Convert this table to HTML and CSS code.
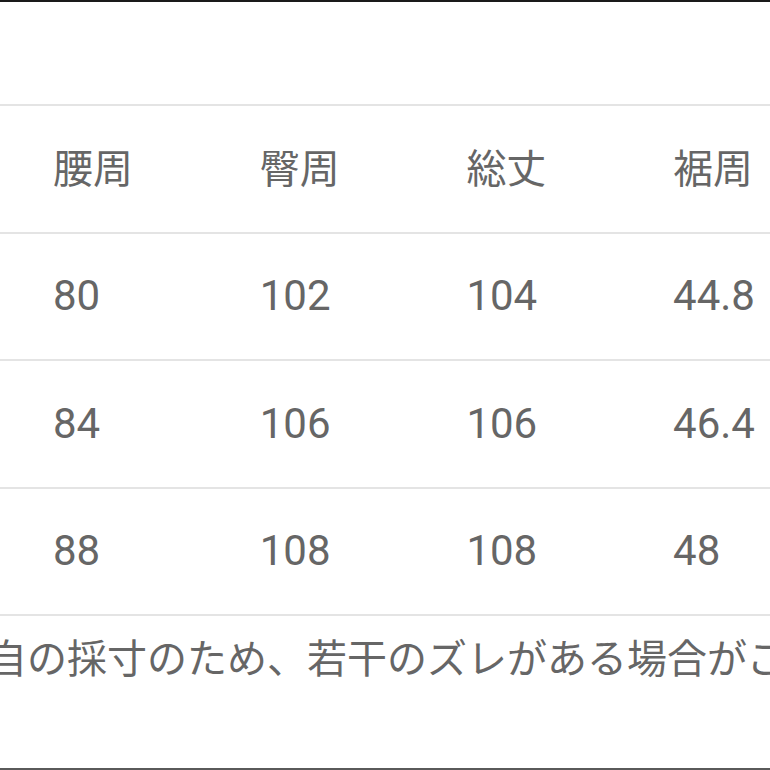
FILE: index.html
```html
<!DOCTYPE html>
<html lang="ja">
<head>
<meta charset="utf-8">
<link rel="stylesheet" href="styles.css">
</head>
<body>
<div class="page">
  <div class="topbar"></div>
  <div class="table">
    <div class="row head">
      <div class="cell">腰周</div>
      <div class="cell">臀周</div>
      <div class="cell">総丈</div>
      <div class="cell">裾周</div>
    </div>
    <div class="row">
      <div class="cell num">80</div>
      <div class="cell num">102</div>
      <div class="cell num">104</div>
      <div class="cell num">44.8</div>
    </div>
    <div class="row">
      <div class="cell num">84</div>
      <div class="cell num">106</div>
      <div class="cell num">106</div>
      <div class="cell num">46.4</div>
    </div>
    <div class="row last">
      <div class="cell num">88</div>
      <div class="cell num">108</div>
      <div class="cell num">108</div>
      <div class="cell num">48</div>
    </div>
  </div>
  <p class="note">自の採寸のため、若干のズレがある場合がご</p>
  <div class="bottombar"></div>
</div>
</body>
</html>
```
FILE: styles.css
```css
html, body {
  margin: 0;
  padding: 0;
  background: #ffffff;
}
body {
  width: 770px;
  height: 770px;
  overflow: hidden;
}
.page {
  width: 770px;
  height: 770px;
  display: flex;
  flex-direction: column;
  overflow: hidden;
  font-family: Roboto, "Noto Sans CJK JP", sans-serif;
  color: #666666;
}
.topbar {
  height: 2px;
  background: #1a1a1a;
  flex: none;
}
.table {
  margin-top: 102px;
  flex: none;
}
.row {
  display: flex;
  height: 125.5px;
  border-top: 2px solid #e4e4e4;
  align-items: center;
  padding-left: 53px;
  white-space: nowrap;
}
.row.last {
  border-bottom: 2px solid #e4e4e4;
}
.cell {
  flex: none;
  width: 206.7px;
  font-size: 40px;
  line-height: 1;
}
.cell.num {
  font-size: 42px;
}
.head .cell {
  margin-top: 2px;
}
.note {
  margin: 0;
  margin-left: -13px;
  height: 80px;
  display: flex;
  align-items: center;
  white-space: nowrap;
  font-size: 40px;
  font-family: "Noto Sans CJK JP", sans-serif;
  flex: none;
}
.bottombar {
  margin-top: auto;
  height: 2px;
  background: #5a5a5a;
  flex: none;
}
```
